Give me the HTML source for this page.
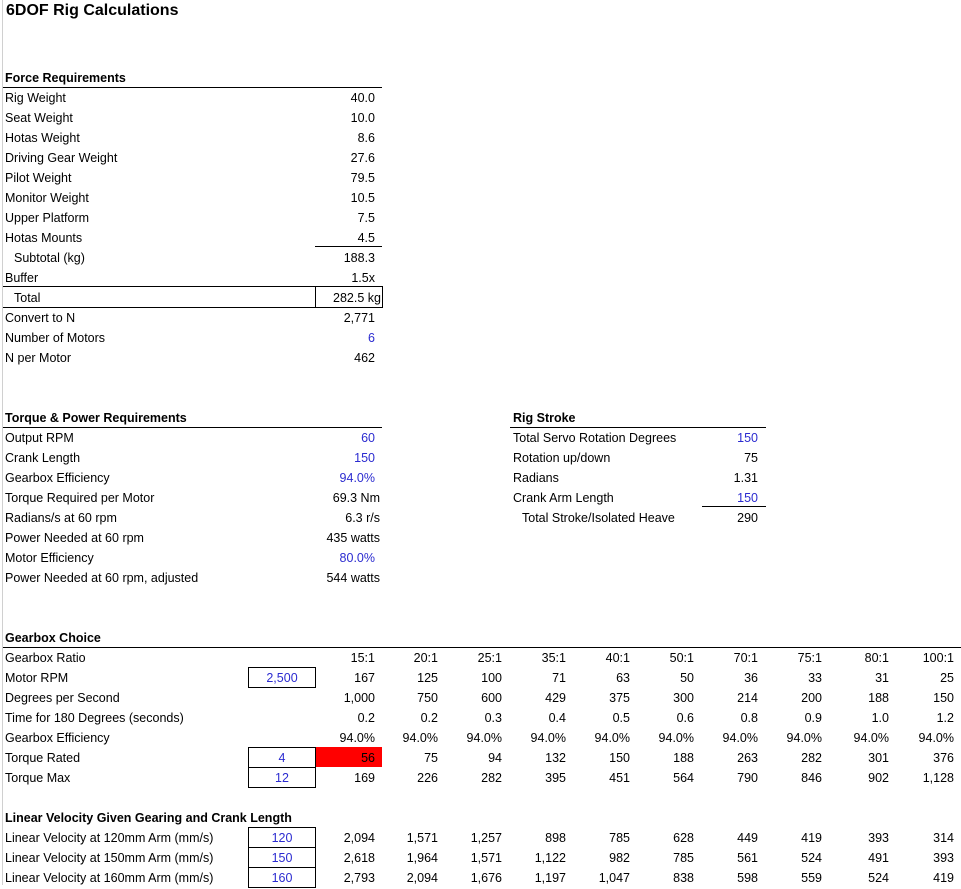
<!DOCTYPE html><html><head><style>
body{margin:0;width:961px;height:885px;background:#fff;position:relative;overflow:hidden;font-family:"Liberation Sans",sans-serif;font-size:12.5px;color:#000}
.c{position:absolute;height:20px;line-height:22px;white-space:nowrap}
.r{text-align:right}
.b{font-weight:bold}
.u{color:#2b2bd0}
.h{position:absolute;height:0;border-top:1px solid #000}
.bx{position:absolute;border:1px solid #000;box-sizing:border-box;height:21px;line-height:21px;text-align:center;color:#2b2bd0}
</style></head><body>
<div style="position:absolute;left:2px;top:0;width:1px;height:885px;background:#d0d0d0"></div>
<div class="c b" style="left:6px;top:0;font-size:16px">6DOF Rig Calculations</div>

<!-- Force -->
<div class="c b" style="left:5px;top:67px">Force Requirements</div>
<div class="h" style="left:3px;width:379px;top:87px"></div>
<div class="c" style="left:5px;top:87px">Rig Weight</div><div class="c r" style="left:300px;width:75px;top:87px">40.0</div>
<div class="c" style="left:5px;top:107px">Seat Weight</div><div class="c r" style="left:300px;width:75px;top:107px">10.0</div>
<div class="c" style="left:5px;top:127px">Hotas Weight</div><div class="c r" style="left:300px;width:75px;top:127px">8.6</div>
<div class="c" style="left:5px;top:147px">Driving Gear Weight</div><div class="c r" style="left:300px;width:75px;top:147px">27.6</div>
<div class="c" style="left:5px;top:167px">Pilot Weight</div><div class="c r" style="left:300px;width:75px;top:167px">79.5</div>
<div class="c" style="left:5px;top:187px">Monitor Weight</div><div class="c r" style="left:300px;width:75px;top:187px">10.5</div>
<div class="c" style="left:5px;top:207px">Upper Platform</div><div class="c r" style="left:300px;width:75px;top:207px">7.5</div>
<div class="c" style="left:5px;top:227px">Hotas Mounts</div><div class="c r" style="left:300px;width:75px;top:227px">4.5</div>
<div class="h" style="left:315px;width:67px;top:246px"></div>
<div class="c" style="left:14px;top:247px">Subtotal (kg)</div><div class="c r" style="left:300px;width:75px;top:247px">188.3</div>
<div class="c" style="left:5px;top:267px">Buffer</div><div class="c r" style="left:300px;width:75px;top:267px">1.5x</div>
<div style="position:absolute;left:3px;top:286px;width:312px;height:20px;border-top:1px solid #000;border-bottom:1px solid #000"></div>
<div style="position:absolute;left:315px;top:286px;width:66px;height:20px;border:1px solid #000"></div>
<div class="c" style="left:14px;top:287px">Total</div><div class="c r" style="left:300px;width:81px;top:287px">282.5 kg</div>
<div class="c" style="left:5px;top:307px">Convert to N</div><div class="c r" style="left:300px;width:75px;top:307px">2,771</div>
<div class="c" style="left:5px;top:327px">Number of Motors</div><div class="c r u" style="left:300px;width:75px;top:327px">6</div>
<div class="c" style="left:5px;top:347px">N per Motor</div><div class="c r" style="left:300px;width:75px;top:347px">462</div>

<!-- Torque -->
<div class="c b" style="left:5px;top:407px">Torque &amp; Power Requirements</div>
<div class="h" style="left:3px;width:379px;top:427px"></div>
<div class="c" style="left:5px;top:427px">Output RPM</div><div class="c r u" style="left:300px;width:75px;top:427px">60</div>
<div class="c" style="left:5px;top:447px">Crank Length</div><div class="c r u" style="left:300px;width:75px;top:447px">150</div>
<div class="c" style="left:5px;top:467px">Gearbox Efficiency</div><div class="c r u" style="left:300px;width:75px;top:467px">94.0%</div>
<div class="c" style="left:5px;top:487px">Torque Required per Motor</div><div class="c r" style="left:300px;width:80px;top:487px">69.3 Nm</div>
<div class="c" style="left:5px;top:507px">Radians/s at 60 rpm</div><div class="c r" style="left:300px;width:80px;top:507px">6.3 r/s</div>
<div class="c" style="left:5px;top:527px">Power Needed at 60 rpm</div><div class="c r" style="left:300px;width:80px;top:527px">435 watts</div>
<div class="c" style="left:5px;top:547px">Motor Efficiency</div><div class="c r u" style="left:300px;width:75px;top:547px">80.0%</div>
<div class="c" style="left:5px;top:567px">Power Needed at 60 rpm, adjusted</div><div class="c r" style="left:300px;width:80px;top:567px">544 watts</div>

<!-- Rig Stroke -->
<div class="c b" style="left:513px;top:407px">Rig Stroke</div>
<div class="h" style="left:510px;width:256px;top:427px"></div>
<div class="c" style="left:513px;top:427px">Total Servo Rotation Degrees</div><div class="c r u" style="left:700px;width:58px;top:427px">150</div>
<div class="c" style="left:513px;top:447px">Rotation up/down</div><div class="c r" style="left:700px;width:58px;top:447px">75</div>
<div class="c" style="left:513px;top:467px">Radians</div><div class="c r" style="left:700px;width:58px;top:467px">1.31</div>
<div class="c" style="left:513px;top:487px">Crank Arm Length</div><div class="c r u" style="left:700px;width:58px;top:487px">150</div>
<div class="h" style="left:702px;width:64px;top:506px"></div>
<div class="c" style="left:522px;top:507px">Total Stroke/Isolated Heave</div><div class="c r" style="left:700px;width:58px;top:507px">290</div>

<!-- Gearbox -->
<div class="c b" style="left:5px;top:627px">Gearbox Choice</div>
<div class="h" style="left:3px;width:958px;top:647px"></div>
<div style="position:absolute;left:315px;top:747px;width:67px;height:20px;background:#ff0000"></div>
<div class="bx" style="left:248px;top:667px;width:68px">2,500</div>
<div class="bx" style="left:248px;top:747px;width:68px">4</div>
<div class="bx" style="left:248px;top:767px;width:68px">12</div>
<div class="c" style="left:5px;top:647px">Gearbox Ratio</div>
<div class="c" style="left:5px;top:667px">Motor RPM</div>
<div class="c" style="left:5px;top:687px">Degrees per Second</div>
<div class="c" style="left:5px;top:707px">Time for 180 Degrees (seconds)</div>
<div class="c" style="left:5px;top:727px">Gearbox Efficiency</div>
<div class="c" style="left:5px;top:747px">Torque Rated</div>
<div class="c" style="left:5px;top:767px">Torque Max</div>

<div class="c b" style="left:5px;top:807px">Linear Velocity Given Gearing and Crank Length</div>
<div class="bx" style="left:248px;top:827px;width:68px">120</div>
<div class="bx" style="left:248px;top:847px;width:68px">150</div>
<div class="bx" style="left:248px;top:867px;width:68px">160</div>
<div class="c" style="left:5px;top:827px">Linear Velocity at 120mm Arm (mm/s)</div>
<div class="c" style="left:5px;top:847px">Linear Velocity at 150mm Arm (mm/s)</div>
<div class="c" style="left:5px;top:867px">Linear Velocity at 160mm Arm (mm/s)</div>

<div class="c r" style="right:586px;top:647px">15:1</div><div class="c r" style="right:586px;top:667px">167</div><div class="c r" style="right:586px;top:687px">1,000</div><div class="c r" style="right:586px;top:707px">0.2</div><div class="c r" style="right:586px;top:727px">94.0%</div><div class="c r" style="right:586px;top:747px">56</div><div class="c r" style="right:586px;top:767px">169</div><div class="c r" style="right:586px;top:827px">2,094</div><div class="c r" style="right:586px;top:847px">2,618</div><div class="c r" style="right:586px;top:867px">2,793</div>
<div class="c r" style="right:523px;top:647px">20:1</div><div class="c r" style="right:523px;top:667px">125</div><div class="c r" style="right:523px;top:687px">750</div><div class="c r" style="right:523px;top:707px">0.2</div><div class="c r" style="right:523px;top:727px">94.0%</div><div class="c r" style="right:523px;top:747px">75</div><div class="c r" style="right:523px;top:767px">226</div><div class="c r" style="right:523px;top:827px">1,571</div><div class="c r" style="right:523px;top:847px">1,964</div><div class="c r" style="right:523px;top:867px">2,094</div>
<div class="c r" style="right:459px;top:647px">25:1</div><div class="c r" style="right:459px;top:667px">100</div><div class="c r" style="right:459px;top:687px">600</div><div class="c r" style="right:459px;top:707px">0.3</div><div class="c r" style="right:459px;top:727px">94.0%</div><div class="c r" style="right:459px;top:747px">94</div><div class="c r" style="right:459px;top:767px">282</div><div class="c r" style="right:459px;top:827px">1,257</div><div class="c r" style="right:459px;top:847px">1,571</div><div class="c r" style="right:459px;top:867px">1,676</div>
<div class="c r" style="right:395px;top:647px">35:1</div><div class="c r" style="right:395px;top:667px">71</div><div class="c r" style="right:395px;top:687px">429</div><div class="c r" style="right:395px;top:707px">0.4</div><div class="c r" style="right:395px;top:727px">94.0%</div><div class="c r" style="right:395px;top:747px">132</div><div class="c r" style="right:395px;top:767px">395</div><div class="c r" style="right:395px;top:827px">898</div><div class="c r" style="right:395px;top:847px">1,122</div><div class="c r" style="right:395px;top:867px">1,197</div>
<div class="c r" style="right:331px;top:647px">40:1</div><div class="c r" style="right:331px;top:667px">63</div><div class="c r" style="right:331px;top:687px">375</div><div class="c r" style="right:331px;top:707px">0.5</div><div class="c r" style="right:331px;top:727px">94.0%</div><div class="c r" style="right:331px;top:747px">150</div><div class="c r" style="right:331px;top:767px">451</div><div class="c r" style="right:331px;top:827px">785</div><div class="c r" style="right:331px;top:847px">982</div><div class="c r" style="right:331px;top:867px">1,047</div>
<div class="c r" style="right:267px;top:647px">50:1</div><div class="c r" style="right:267px;top:667px">50</div><div class="c r" style="right:267px;top:687px">300</div><div class="c r" style="right:267px;top:707px">0.6</div><div class="c r" style="right:267px;top:727px">94.0%</div><div class="c r" style="right:267px;top:747px">188</div><div class="c r" style="right:267px;top:767px">564</div><div class="c r" style="right:267px;top:827px">628</div><div class="c r" style="right:267px;top:847px">785</div><div class="c r" style="right:267px;top:867px">838</div>
<div class="c r" style="right:203px;top:647px">70:1</div><div class="c r" style="right:203px;top:667px">36</div><div class="c r" style="right:203px;top:687px">214</div><div class="c r" style="right:203px;top:707px">0.8</div><div class="c r" style="right:203px;top:727px">94.0%</div><div class="c r" style="right:203px;top:747px">263</div><div class="c r" style="right:203px;top:767px">790</div><div class="c r" style="right:203px;top:827px">449</div><div class="c r" style="right:203px;top:847px">561</div><div class="c r" style="right:203px;top:867px">598</div>
<div class="c r" style="right:139px;top:647px">75:1</div><div class="c r" style="right:139px;top:667px">33</div><div class="c r" style="right:139px;top:687px">200</div><div class="c r" style="right:139px;top:707px">0.9</div><div class="c r" style="right:139px;top:727px">94.0%</div><div class="c r" style="right:139px;top:747px">282</div><div class="c r" style="right:139px;top:767px">846</div><div class="c r" style="right:139px;top:827px">419</div><div class="c r" style="right:139px;top:847px">524</div><div class="c r" style="right:139px;top:867px">559</div>
<div class="c r" style="right:72px;top:647px">80:1</div><div class="c r" style="right:72px;top:667px">31</div><div class="c r" style="right:72px;top:687px">188</div><div class="c r" style="right:72px;top:707px">1.0</div><div class="c r" style="right:72px;top:727px">94.0%</div><div class="c r" style="right:72px;top:747px">301</div><div class="c r" style="right:72px;top:767px">902</div><div class="c r" style="right:72px;top:827px">393</div><div class="c r" style="right:72px;top:847px">491</div><div class="c r" style="right:72px;top:867px">524</div>
<div class="c r" style="right:7px;top:647px">100:1</div><div class="c r" style="right:7px;top:667px">25</div><div class="c r" style="right:7px;top:687px">150</div><div class="c r" style="right:7px;top:707px">1.2</div><div class="c r" style="right:7px;top:727px">94.0%</div><div class="c r" style="right:7px;top:747px">376</div><div class="c r" style="right:7px;top:767px">1,128</div><div class="c r" style="right:7px;top:827px">314</div><div class="c r" style="right:7px;top:847px">393</div><div class="c r" style="right:7px;top:867px">419</div>
</body></html>
